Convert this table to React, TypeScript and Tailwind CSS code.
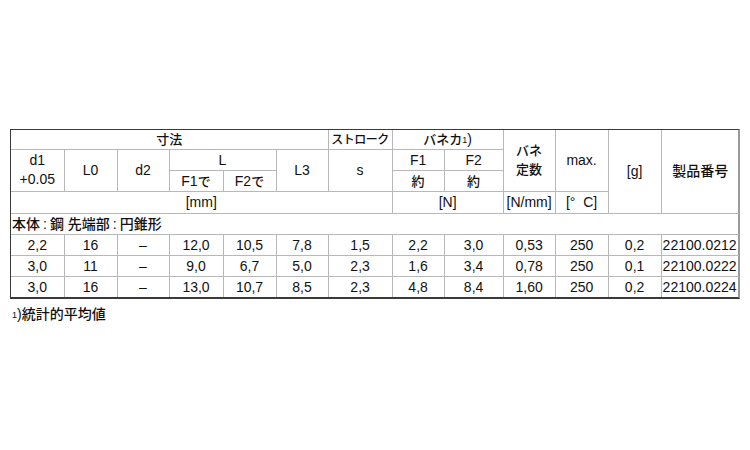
import React from 'react';

const cell = 'border border-[#b8b8b8] p-0 text-center align-middle whitespace-nowrap';
const J = ({ children }: { children: React.ReactNode }) => (
  <span className="font-medium text-[13px]">{children}</span>
);
const Colon = () => <span className="mx-[3px]">:</span>;

const widths = [53, 53, 52, 54, 53, 52, 64, 52, 59, 52, 53, 53, 78];

const rows = [
  ['2,2', '16', '–', '12,0', '10,5', '7,8', '1,5', '2,2', '3,0', '0,53', '250', '0,2', '22100.0212'],
  ['3,0', '11', '–', '9,0', '6,7', '5,0', '2,3', '1,6', '3,4', '0,78', '250', '0,1', '22100.0222'],
  ['3,0', '16', '–', '13,0', '10,7', '8,5', '2,3', '4,8', '8,4', '1,60', '250', '0,2', '22100.0224'],
];

export default function App() {
  return (
    <div
      className="w-[750px] h-[450px] bg-white text-[#111] text-[14px] leading-none pt-[129px] pl-[10px]"
      style={{ fontFamily: '"Liberation Sans", "Noto Sans CJK JP", sans-serif' }}
    >
      <div className="w-[730px] border-t border-l border-b-2 border-r-2 border-t-[#3a3a3a] border-l-[#3a3a3a] border-b-[#3a3a3a] border-r-[#9a9a9a]">
        <table className="w-full table-fixed border-collapse border-hidden">
          <colgroup>
            {widths.map((w, i) => (
              <col key={i} style={{ width: w }} />
            ))}
          </colgroup>
          <tbody>
            <tr className="h-[19px]">
              <td className={cell} colSpan={6}><J>寸法</J></td>
              <td className={cell}>
                <span className="font-medium text-[12px] tracking-[-0.5px]">ストローク</span>
              </td>
              <td className={cell} colSpan={2}>
                <J>バネカ</J>
                <sup className="text-[9px] relative -top-[1px]">1</sup>)
              </td>
              <td className={cell} rowSpan={3}>
                <div className="leading-[19px]"><J>バネ</J></div>
                <div className="leading-[19px]"><J>定数</J></div>
              </td>
              <td className={cell} rowSpan={3}>max.</td>
              <td className={cell} rowSpan={4}>[g]</td>
              <td className={cell} rowSpan={4}><span className="font-medium text-[14px]">製品番号</span></td>
            </tr>
            <tr className="h-[21px]">
              <td className={cell} rowSpan={2}>
                <div className="leading-[19px]">d1</div>
                <div className="leading-[19px]">+0.05</div>
              </td>
              <td className={cell} rowSpan={2}>L0</td>
              <td className={cell} rowSpan={2}>d2</td>
              <td className={cell} colSpan={2}>L</td>
              <td className={cell} rowSpan={2}>L3</td>
              <td className={cell} rowSpan={2}>s</td>
              <td className={cell}>F1</td>
              <td className={cell}>F2</td>
            </tr>
            <tr className="h-[21px]">
              <td className={cell}>F1<J>で</J></td>
              <td className={cell}>F2<J>で</J></td>
              <td className={cell}><J>約</J></td>
              <td className={cell}><J>約</J></td>
            </tr>
            <tr className="h-[22px]">
              <td className={cell} colSpan={7}>[mm]</td>
              <td className={cell} colSpan={2}>[N]</td>
              <td className={cell}>[N/mm]</td>
              <td className={cell}>[°&nbsp;&nbsp;C]</td>
            </tr>
            <tr className="h-[21px]">
              <td className={`${cell} text-left pl-[1px] leading-[14px]`} colSpan={13}>
                <span className="font-medium text-[14px] leading-[14px]">
                  本体<Colon />鋼 先端部<Colon />円錐形
                </span>
              </td>
            </tr>
            {rows.map((r, i) => (
              <tr key={i} className="h-[21px]">
                {r.map((v, j) => (
                  <td key={j} className={j === 12 ? `${cell} text-left pl-[1px]` : cell}>
                    {v}
                  </td>
                ))}
              </tr>
            ))}
          </tbody>
        </table>
      </div>
      <div className="mt-[8px] pl-[2px]">
        <sup className="text-[9px] relative -top-[1px]">1</sup>)<span className="font-medium text-[14px]">統計的平均値</span>
      </div>
    </div>
  );
}
